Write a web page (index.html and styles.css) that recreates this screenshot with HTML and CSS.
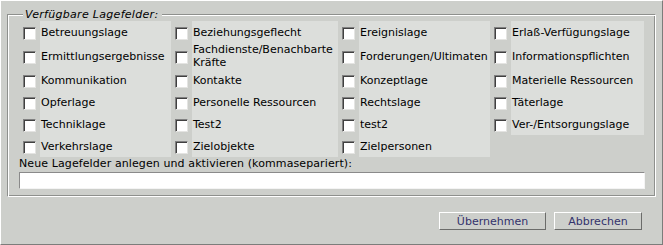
FILE: index.html
```html
<!DOCTYPE html>
<html lang="de">
<head>
    <meta charset="UTF-8">
    <meta name="viewport" content="width=device-width, initial-scale=1.0">
    <title>Lagefelder</title>
    <link rel="stylesheet" href="styles.css">
</head>
<body>
    <div class="dialog">
        <fieldset class="fields">
            <legend>Verfügbare Lagefelder:</legend>
            <div class="options">
                <label class="opt"><input type="checkbox"><span>Betreuungslage</span></label>
                <label class="opt"><input type="checkbox"><span>Ermittlungsergebnisse</span></label>
                <label class="opt"><input type="checkbox"><span>Kommunikation</span></label>
                <label class="opt"><input type="checkbox"><span>Opferlage</span></label>
                <label class="opt"><input type="checkbox"><span>Techniklage</span></label>
                <label class="opt"><input type="checkbox"><span>Verkehrslage</span></label>

                <label class="opt"><input type="checkbox"><span>Beziehungsgeflecht</span></label>
                <label class="opt"><input type="checkbox"><span>Fachdienste/Benachbarte Kräfte</span></label>
                <label class="opt"><input type="checkbox"><span>Kontakte</span></label>
                <label class="opt"><input type="checkbox"><span>Personelle Ressourcen</span></label>
                <label class="opt"><input type="checkbox"><span>Test2</span></label>
                <label class="opt"><input type="checkbox"><span>Zielobjekte</span></label>

                <label class="opt"><input type="checkbox"><span>Ereignislage</span></label>
                <label class="opt"><input type="checkbox"><span>Forderungen/Ultimaten</span></label>
                <label class="opt"><input type="checkbox"><span>Konzeptlage</span></label>
                <label class="opt"><input type="checkbox"><span>Rechtslage</span></label>
                <label class="opt"><input type="checkbox"><span>test2</span></label>
                <label class="opt"><input type="checkbox"><span>Zielpersonen</span></label>

                <label class="opt"><input type="checkbox"><span>Erlaß-Verfügungslage</span></label>
                <label class="opt"><input type="checkbox"><span>Informationspflichten</span></label>
                <label class="opt"><input type="checkbox"><span>Materielle Ressourcen</span></label>
                <label class="opt"><input type="checkbox"><span>Täterlage</span></label>
                <label class="opt"><input type="checkbox"><span>Ver-/Entsorgungslage</span></label>
            </div>
            <label class="new-label" for="new-fields">Neue Lagefelder anlegen und aktivieren (kommasepariert):</label>
            <input type="text" id="new-fields" class="new-input">
        </fieldset>
        <div class="buttons">
            <button class="btn btn-ok">Übernehmen</button>
            <button class="btn btn-cancel">Abbrechen</button>
        </div>
    </div>
</body>
</html>
```

FILE: styles.css
```css
body {
    margin: 0;
    font-family: "DejaVu Sans", Verdana, sans-serif;
    font-size: 11px;
    line-height: 13px;
    color: #000;
    background: #cdcfcb;
}
.dialog {
    width: 663px;
    height: 245px;
    box-sizing: border-box;
    padding: 7px 6px 13px 6px;
    background: #cdcfcb;
    border: 1px solid;
    border-color: #fff #7c7d7b #7c7d7b #fff;
}
.fields {
    margin: 0;
    padding: 0 10px 7px 11px;
    border: 1px solid;
    border-color: #8e908d #fff #fff #8e908d;
    box-shadow: inset 1px 1px 0 #fff, inset -1px -1px 0 #8e908d;
}
.fields legend {
    margin-left: 4px;
    padding: 0 4px 0 2px;
    font-style: italic;
    letter-spacing: 0.3px;
    line-height: 13px;
    background: #cdcfcb;
}
.options {
    display: grid;
    grid-auto-flow: column;
    grid-template-rows: repeat(6, auto);
    grid-template-columns: 152px 167px 152px 154px;
}
.opt {
    display: flex;
    min-height: 22px;
}
.opt input {
    appearance: none;
    -webkit-appearance: none;
    flex: none;
    align-self: center;
    width: 13px;
    height: 13px;
    margin: 2px 4px 0 4px;
    background: #fff;
    border: 1px solid;
    border-color: #808080 #e4e4e2 #e4e4e2 #808080;
    box-shadow: inset 1px 1px 0 #404040;
}
.opt span {
    flex: 1;
    display: flex;
    align-items: center;
    padding-left: 1px;
    background: #dcdedb;
}
.new-label {
    display: block;
    margin-bottom: 2px;
    letter-spacing: 0.1px;
}
.new-input {
    display: block;
    width: 100%;
    height: 17px;
    box-sizing: border-box;
    margin: 0;
    padding: 0 2px;
    font: inherit;
    background: #fff;
    border: 1px solid;
    border-color: #8a8a8a #f4f4f4 #f4f4f4 #8a8a8a;
    outline: none;
}
.buttons {
    display: flex;
    justify-content: flex-end;
    gap: 8px;
    margin-top: 15px;
    padding-right: 14px;
}
.btn {
    height: 18px;
    padding: 0;
    font-family: "DejaVu Sans", Verdana, sans-serif;
    font-size: 11px;
    color: #33336b;
    background: #cdcfcb;
    border: 1px solid;
    border-color: #fff #6b6c6a #6b6c6a #fff;
}
.btn-ok {
    width: 107px;
}
.btn-cancel {
    width: 88px;
}
```
